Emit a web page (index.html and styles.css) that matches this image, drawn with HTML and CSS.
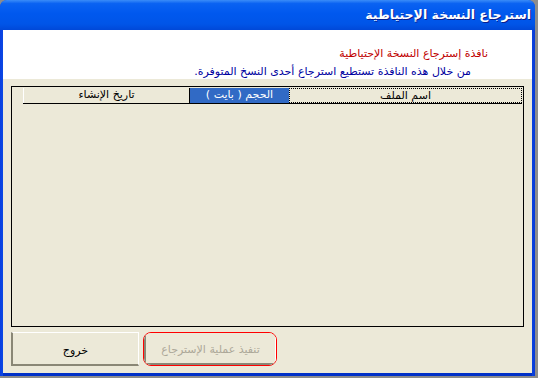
FILE: index.html
```html
<!DOCTYPE html>
<html dir="rtl" lang="ar">

<head>
    <meta charset="utf-8">
    <title>استرجاع النسخة الإحتياطية</title>
    <link rel="stylesheet" href="styles.css">
</head>

<body>
    <div class="window">
        <div class="titlebar">استرجاع النسخة الإحتياطية</div>

        <div class="client">
            <!-- info panel -->
            <div class="info">
                <div class="info-title">نافذة إسترجاع النسخة الإحتياطية</div>
                <div class="info-text">من خلال هذه النافذة تستطيع استرجاع أحدى النسخ المتوفرة.</div>
            </div>

            <div class="body">
                <div class="listview">
                    <div class="header">
                        <div class="col col-name">اسم الملف</div>
                        <div class="col col-size">الحجم ( بايت )</div>
                        <div class="col col-date">تاريخ الإنشاء</div>
                    </div>
                </div>

                <div class="buttons">
                    <div class="focus-ring">
                        <button class="btn btn-run" disabled>تنفيذ عملية الإسترجاع</button>
                    </div>
                    <button class="btn btn-exit">خروج</button>
                </div>
            </div>
        </div>
    </div>
</body>

</html>
```

FILE: styles.css
```css
/* window frame */

body {
    margin: 0;
    background-color: #8c8c8c;
    font-family: "DejaVu Sans", sans-serif;
    font-size: 11px;
}

.window {
    width: 535px;
    height: 376px;
    margin-right: auto;
    display: flex;
    flex-direction: column;
    background: linear-gradient(to right, #0a3fe0, #0d5ff0 2%, #0a5ae8 98%, #0a3ad8);
    border-radius: 7px 7px 0 0;
}

.titlebar {
    height: 30px;
    line-height: 30px;
    padding: 0 4px;
    color: #ffffff;
    font-weight: bold;
    font-size: 12.5px;
    text-shadow: 1px 1px 0 #0a1e8c;
    border-radius: 7px 7px 0 0;
    background: linear-gradient(to bottom, #3a8cf8 0%, #0a62f2 12%, #0058ee 45%, #0055e8 80%, #0048d8 100%);
}

.client {
    flex: 1;
    display: flex;
    flex-direction: column;
    margin: 0 3px 3px 3px;
    background-color: #ece9d8;
    box-shadow: 0 3px 0 #0030c8;
}

/* info panel */

.info {
    height: 49px;
    background-color: #ffffff;
    padding: 17px 44px 0 0;
    box-sizing: border-box;
}

.info-title {
    color: #c00000;
    height: 18px;
}

.info-text {
    color: #0000a0;
    margin-right: 17px;
}

/* list and buttons */

.body {
    flex: 1;
    display: flex;
    flex-direction: column;
    padding: 7px 8px 0 8px;
}

.listview {
    height: 241px;
    border: 1px solid #000000;
    box-sizing: border-box;
    padding: 1px 1px 0 0;
}

.header {
    display: flex;
    height: 15px;
    margin-left: 11px;
    border-bottom: 1px solid #000000;
}

.col {
    text-align: center;
    line-height: 14px;
    border-left: 1px solid #ffffff;
    box-sizing: border-box;
}

.col-name {
    width: 233px;
    border: 1px dotted #000000;
    line-height: 13px;
}

.col-size {
    width: 100px;
    background-color: #316ac5;
    color: #ffffff;
    border-left: 1px solid #000000;
}

.col-date {
    flex: 1;
}

.buttons {
    display: flex;
    justify-content: flex-end;
    gap: 4px;
    padding-top: 5px;
}

.btn {
    font-family: "DejaVu Sans", sans-serif;
    font-size: 11px;
    background-color: #ece9d8;
    border: none;
    border-top: 1px solid #ffffff;
    border-right: 1px solid #ffffff;
    border-left: 2px solid #8a8776;
    border-bottom: 2px solid #8a8776;
    height: 34px;
    box-sizing: border-box;
    padding: 3px 0 0 0;
}

.btn-exit {
    width: 128px;
    color: #000000;
}

.focus-ring {
    border: 1px solid #ff0000;
    border-radius: 8px;
    overflow: hidden;
    height: 34px;
    box-sizing: border-box;
}

.btn-run {
    width: 132px;
    height: 32px;
    color: #aca899;
    border-top: none;
}
```
